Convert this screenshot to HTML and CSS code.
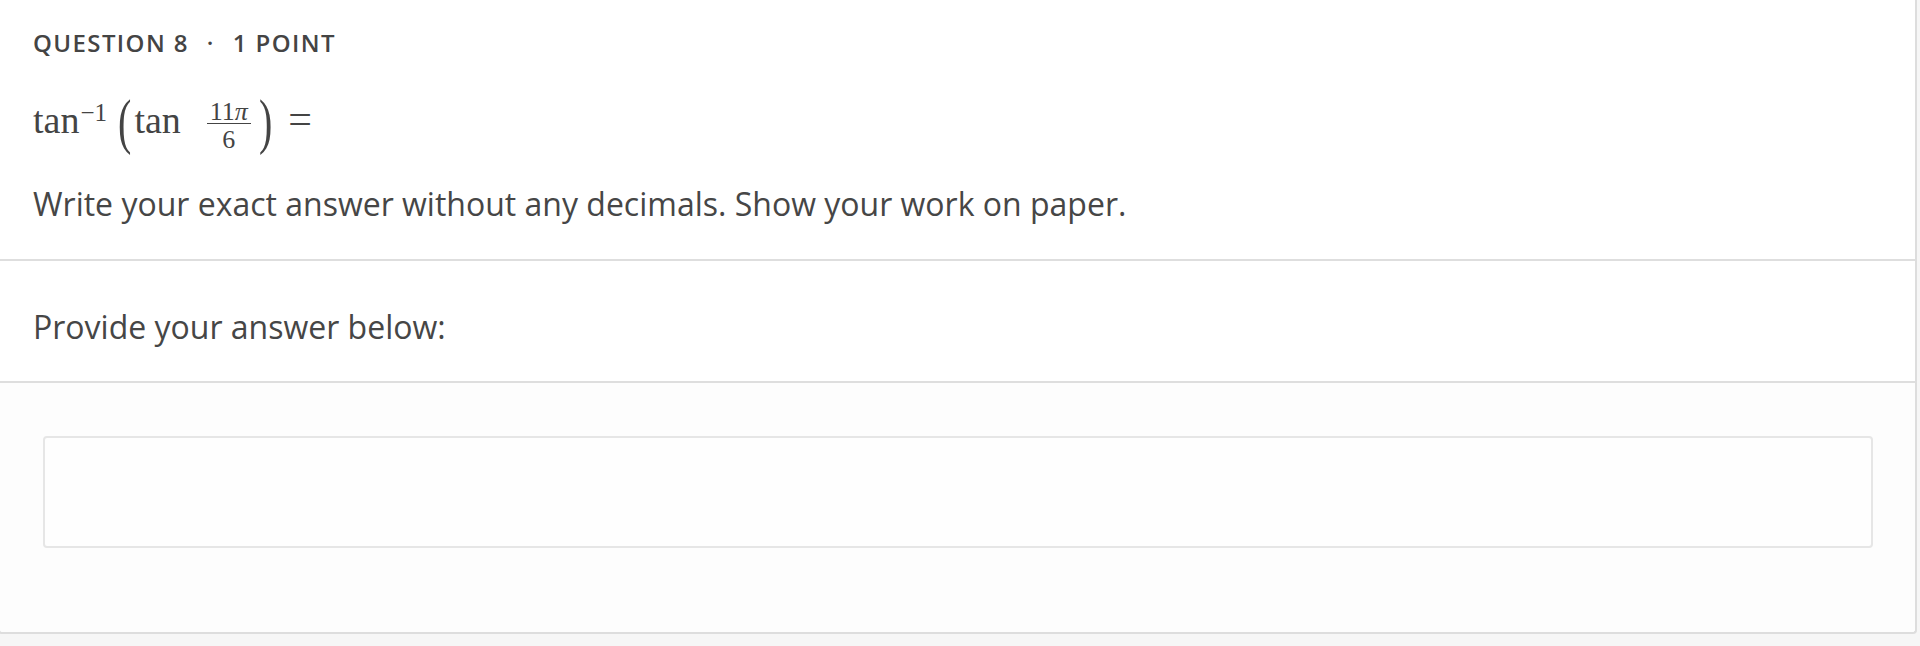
FILE: index.html
```html
<!DOCTYPE html>
<html lang="en">
<head>
<meta charset="utf-8">
<title>Question 8</title>
<link rel="stylesheet" href="styles.css">
</head>
<body>
<div class="card">
  <section class="question">
    <div class="label">Question 8<span class="sep">·</span>1 point</div>
    <div class="math"><span class="fn">tan</span><span class="sup">−1</span><span class="paren open">(</span><span class="fn tan2">tan</span><span class="frac"><span class="num">11<i>π</i></span><span class="den">6</span></span><span class="paren close">)</span><span class="eq">=</span></div>
    <p class="text">Write your exact answer without any decimals. Show your work on paper.</p>
  </section>
  <section class="prompt">
    <p class="text">Provide your answer below:</p>
  </section>
  <section class="answer">
    <div class="input"></div>
  </section>
</div>
</body>
</html>
```

FILE: styles.css
```css
html, body {
  margin: 0;
  padding: 0;
  background: #f6f6f6;
}
body {
  font-family: "Open Sans", "Liberation Sans", sans-serif;
  color: #464646;
  height: 646px;
  overflow: hidden;
}
.card {
  background: #ffffff;
  border: 2px solid #dddddd;
  border-top: none;
  border-radius: 0 0 4px 4px;
  margin-left: -2px;
  width: 1919px;
  box-sizing: border-box;
}
.question {
  padding: 28px 33px 0 33px;
  height: 261px;
  box-sizing: border-box;
  border-bottom: 2px solid #dedede;
}
.label {
  font-size: 24px;
  line-height: 30px;
  font-weight: 600;
  letter-spacing: 1.4px;
  text-transform: uppercase;
  color: #444444;
}
.sep {
  margin: 0 18px;
}
.math {
  margin-top: 34px;
  height: 56px;
  font-family: "Liberation Serif", "Times New Roman", serif;
  font-size: 38px;
  line-height: 56px;
  color: #444444;
  white-space: nowrap;
}
.sup {
  font-size: 25px;
  line-height: 25px;
  vertical-align: 12px;
  margin-left: 1px;
}
.paren {
  display: inline-block;
  font-size: 40px;
  line-height: 40px;
  transform: scaleY(1.55);
  vertical-align: -2px;
}
.paren.open { margin-left: 11px; }
.paren.close { margin-left: 8px; }
.tan2 { margin-left: 3px; }
.frac {
  display: inline-flex;
  flex-direction: column;
  vertical-align: 13px;
  margin-left: 26px;
  font-size: 26px;
  line-height: 22px;
  text-align: center;
}
.num {
  padding: 0 3px;
  border-bottom: 1px solid #444444;
}
.den {
  padding-top: 5px;
}
.eq {
  font-size: 42px;
  line-height: 42px;
  margin-left: 16px;
}
.text {
  margin: 0;
  font-size: 32px;
  line-height: 44px;
}
.question .text {
  margin-top: 34px;
}
.prompt {
  height: 122px;
  box-sizing: border-box;
  padding: 44px 33px 0 33px;
  border-bottom: 2px solid #dedede;
}
.answer {
  background: #fdfdfd;
  padding: 53px 42px 84px 43px;
  border-radius: 0 0 4px 4px;
}
.input {
  height: 112px;
  box-sizing: border-box;
  border: 2px solid #e6e6e6;
  border-radius: 4px;
  background: #fefefe;
}
```
